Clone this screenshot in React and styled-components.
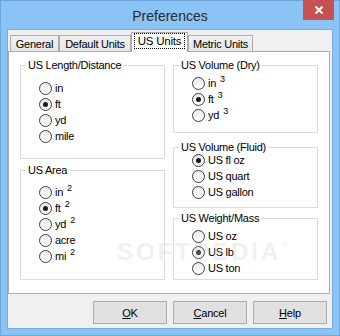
import React from "react";
import styled, { createGlobalStyle } from "styled-components";

const GlobalStyle = createGlobalStyle`
  html, body { margin: 0; padding: 0; background: #8bc3f4; }
  body { font-family: "Liberation Sans", Arial, sans-serif; }
  * { box-sizing: border-box; }
`;

const Window = styled.div`
  position: relative;
  width: 340px;
  height: 336px;
  background: #8bc3f4;
  border: 1px solid #6ea6da;
  display: flex;
  flex-direction: column;
`;

const TitleBar = styled.div`
  display: grid;
  grid-template-columns: 1fr auto 1fr;
  align-items: center;
  height: 29px;
`;

const Title = styled.div`
  grid-column: 2;
  font-size: 14px;
  color: #2a2a2a;
  padding-top: 1px;
`;

const CloseButton = styled.div`
  grid-column: 3;
  justify-self: end;
  align-self: start;
  width: 31px;
  height: 20px;
  margin-top: -1px;
  margin-right: 5px;
  background: #c75050;
  display: flex;
  align-items: center;
  justify-content: center;
`;

const Client = styled.div`
  flex: 1;
  margin: 0 7px 7px;
  background: #f0f0f0;
  box-shadow: 0 0 0 1px #79aee0;
  display: flex;
  flex-direction: column;
  padding-top: 2px;
  font-size: 11px;
  letter-spacing: -0.25px;
  color: #000;
`;

const TabStrip = styled.div`
  display: flex;
  align-items: flex-end;
  height: 19px;
  padding-left: 2px;
`;

const Tab = styled.div`
  width: ${(p) => p.$w}px;
  height: 16px;
  border: 1px solid #acacac;
  border-bottom: none;
  background: linear-gradient(#f2f2f2, #e6e6e6);
  display: flex;
  align-items: center;
  justify-content: center;
  padding-top: 1px;
`;

const ActiveTab = styled.div`
  position: relative;
  z-index: 1;
  width: ${(p) => p.$w}px;
  height: 20px;
  margin-bottom: -1px;
  border: 1px solid #acacac;
  border-bottom: none;
  background: #fff;
  display: flex;
  align-items: flex-start;
  padding: 0 2px;
`;

const FocusRing = styled.div`
  flex: 1;
  height: 16px;
  border: 1px dotted #000;
  display: flex;
  align-items: center;
  justify-content: center;
  font-size: 11.5px;
`;

const Panel = styled.div`
  position: relative;
  width: 322px;
  height: 243px;
  background: #fff;
  border: 1px solid #acacac;
  display: grid;
  grid-template-columns: 145px 145px;
  column-gap: 8px;
  align-content: start;
  padding: 13px 11px 0;
`;

const Column = styled.div`
  display: flex;
  flex-direction: column;
`;

const GroupBox = styled.div`
  position: relative;
  height: ${(p) => p.$h}px;
  margin-top: ${(p) => p.$mt || 0}px;
  padding: ${(p) => p.$pt}px 0 0 18px;
  border: 1px solid #dcdcdc;
  display: flex;
  flex-direction: column;
`;

const Legend = styled.span`
  position: absolute;
  top: -7px;
  left: 5px;
  padding: 0 2px;
  background: #fff;
  line-height: 13px;
`;

const RadioRow = styled.div`
  display: flex;
  align-items: center;
  height: 16px;
  gap: 3px;
`;

const RadioCircle = styled.span`
  position: relative;
  width: 13px;
  height: 13px;
  border-radius: 50%;
  border: 1px solid #3c3c3c;
  background: linear-gradient(#eaeaea, #ffffff);
  flex: none;
  &::after {
    content: "";
    display: ${(p) => (p.$checked ? "block" : "none")};
    position: absolute;
    left: 3px;
    top: 3px;
    width: 5px;
    height: 5px;
    border-radius: 50%;
    background: #1a1a1a;
  }
`;

const Sup = styled.span`
  position: relative;
  top: -5px;
  margin-left: 4px;
  font-size: 9px;
`;

const ButtonRow = styled.div`
  display: flex;
  justify-content: flex-end;
  gap: 6px;
  padding-right: 5px;
  margin-top: 7px;
`;

const Button = styled.button`
  width: 74px;
  height: 23px;
  border: 1px solid #acacac;
  background: #e1e1e1;
  font-family: inherit;
  font-size: 11px;
  letter-spacing: -0.2px;
  color: #000;
  padding: 0;
`;

const Mnemonic = styled.span`
  text-decoration: underline;
`;

const Watermark = styled.div`
  position: absolute;
  top: 232px;
  left: 116px;
  font-size: 24px;
  line-height: 24px;
  font-weight: bold;
  letter-spacing: 3px;
  color: rgba(205, 205, 205, 0.3);
  pointer-events: none;
`;

const WatermarkMark = styled.span`
  font-size: 9px;
  vertical-align: 12px;
  letter-spacing: 0;
`;

function Radio({ label, sup, checked }) {
  return (
    <RadioRow>
      <RadioCircle $checked={checked} />
      <span>
        {label}
        {sup && <Sup>{sup}</Sup>}
      </span>
    </RadioRow>
  );
}

function Group({ title, h, mt, pt, items }) {
  return (
    <GroupBox $h={h} $mt={mt} $pt={pt}>
      <Legend>{title}</Legend>
      {items.map((it) => (
        <Radio key={it.label} {...it} />
      ))}
    </GroupBox>
  );
}

export default function App() {
  return (
    <>
      <GlobalStyle />
      <Window>
        <TitleBar>
          <Title>Preferences</Title>
          <CloseButton>
            <svg width="10" height="8" viewBox="0 0 10 8">
              <path d="M1.5 0.5 L8.5 7.5 M8.5 0.5 L1.5 7.5" stroke="#fff" strokeWidth="2" />
            </svg>
          </CloseButton>
        </TitleBar>
        <Client>
          <TabStrip>
            <Tab $w={49}>General</Tab>
            <Tab $w={72}>Default Units</Tab>
            <ActiveTab $w={57}>
              <FocusRing>US Units</FocusRing>
            </ActiveTab>
            <Tab $w={65}>Metric Units</Tab>
          </TabStrip>
          <Panel>
            <Column>
              <Group
                title="US Length/Distance"
                h={94}
                pt={14}
                items={[
                  { label: "in" },
                  { label: "ft", checked: true },
                  { label: "yd" },
                  { label: "mile" },
                ]}
              />
              <Group
                title="US Area"
                h={110}
                mt={11}
                pt={13}
                items={[
                  { label: "in", sup: "2" },
                  { label: "ft", sup: "2", checked: true },
                  { label: "yd", sup: "2" },
                  { label: "acre" },
                  { label: "mi", sup: "2" },
                ]}
              />
            </Column>
            <Column>
              <Group
                title="US Volume (Dry)"
                h={68}
                pt={9}
                items={[
                  { label: "in", sup: "3" },
                  { label: "ft", sup: "3", checked: true },
                  { label: "yd", sup: "3" },
                ]}
              />
              <Group
                title="US Volume (Fluid)"
                h={61}
                mt={14}
                pt={4}
                items={[
                  { label: "US fl oz", checked: true },
                  { label: "US quart" },
                  { label: "US gallon" },
                ]}
              />
              <Group
                title="US Weight/Mass"
                h={62}
                mt={10}
                pt={9}
                items={[
                  { label: "US oz" },
                  { label: "US lb", checked: true },
                  { label: "US ton" },
                ]}
              />
            </Column>
          </Panel>
          <ButtonRow>
            <Button>
              <Mnemonic>O</Mnemonic>K
            </Button>
            <Button>
              <Mnemonic>C</Mnemonic>ancel
            </Button>
            <Button>
              <Mnemonic>H</Mnemonic>elp
            </Button>
          </ButtonRow>
        </Client>
        <Watermark>
          SOFTPEDIA<WatermarkMark>®</WatermarkMark>
        </Watermark>
      </Window>
    </>
  );
}
